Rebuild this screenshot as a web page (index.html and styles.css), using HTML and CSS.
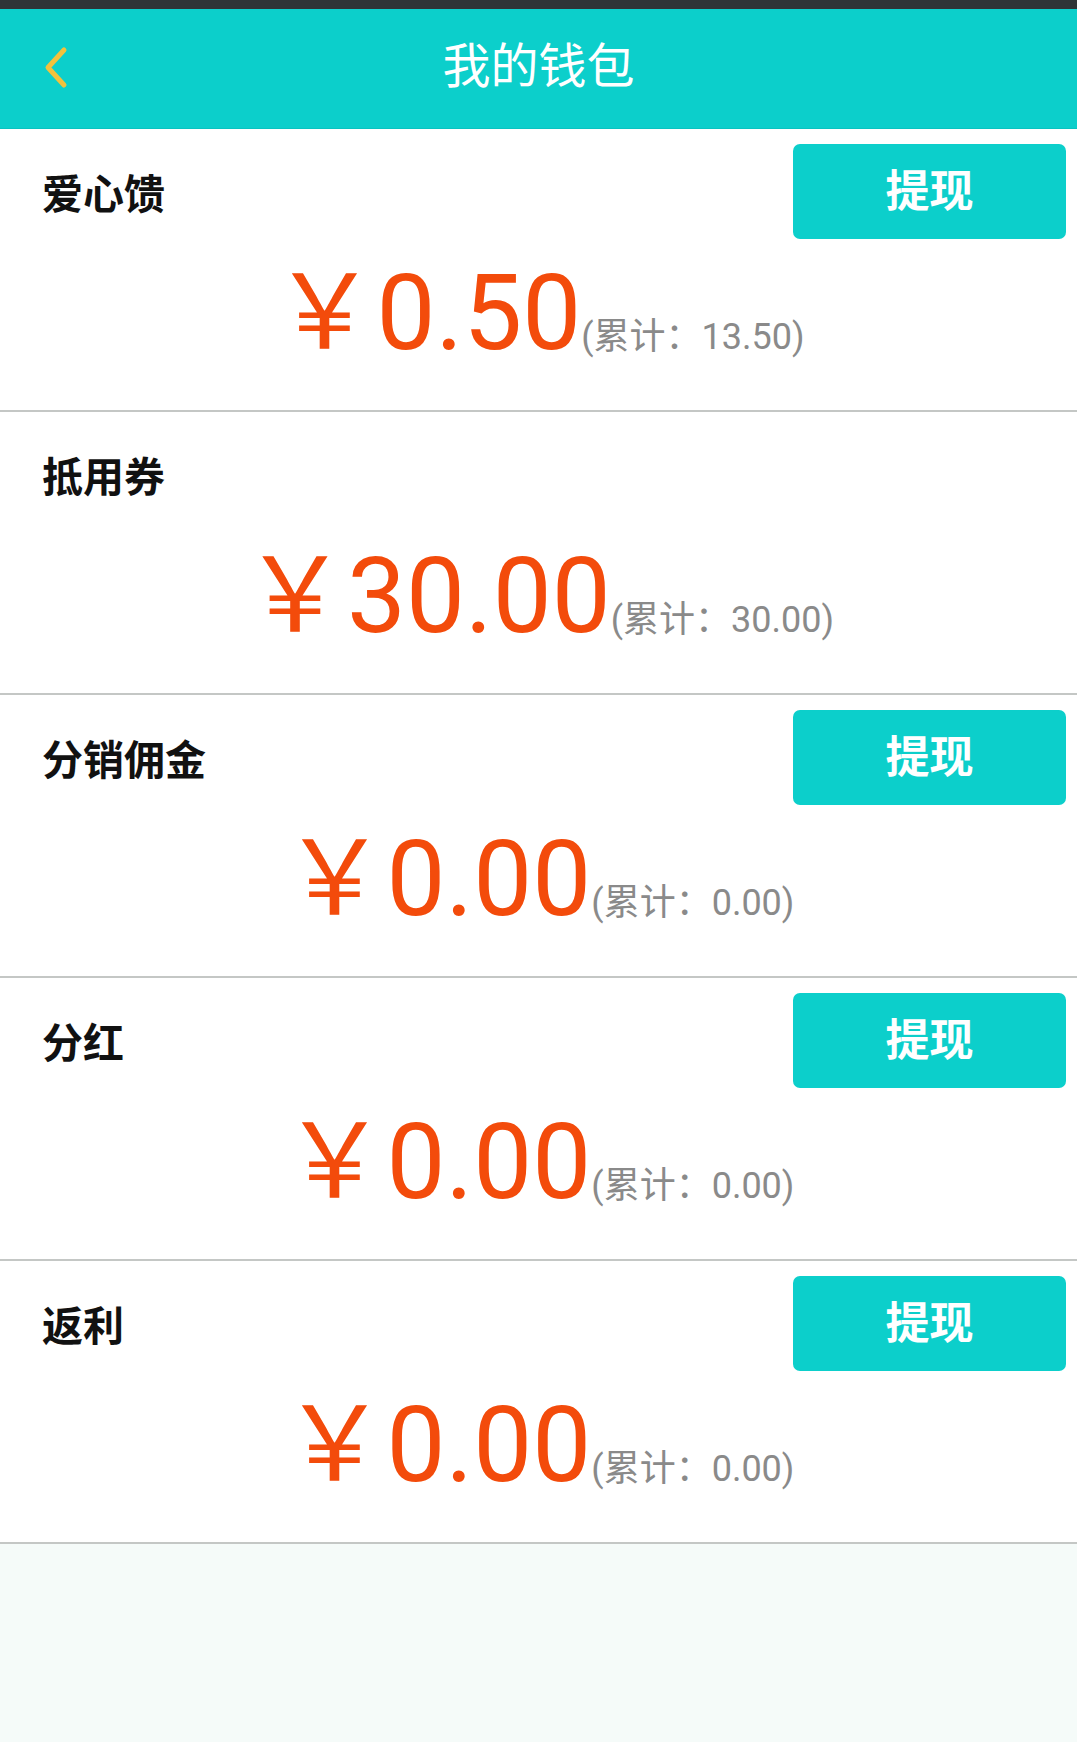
FILE: index.html
```html
<!DOCTYPE html>
<html lang="zh-CN">
<head>
<meta charset="utf-8">
<title>我的钱包</title>
<link rel="stylesheet" href="styles.css">
</head>
<body>
<div class="statusbar"></div>
<header class="topbar">
  <a class="back" href="#" aria-label="返回">
    <svg width="34" height="46" viewBox="0 0 34 46"><path d="M25 5 L9 22.5 L25 40" fill="none" stroke="#f2c23c" stroke-width="5" stroke-linecap="round" stroke-linejoin="round"/></svg>
  </a>
  <h1 class="title">我的钱包</h1>
  <span class="spacer"></span>
</header>
<main class="list">
  <section class="card">
    <div class="card-head"><span class="label">爱心馈</span><button class="btn">提现</button></div>
    <div class="amount"><span class="yen">￥</span><span class="num">0.50</span><span class="total">(累计：13.50)</span></div>
  </section>
  <section class="card">
    <div class="card-head"><span class="label">抵用券</span></div>
    <div class="amount"><span class="yen">￥</span><span class="num">30.00</span><span class="total">(累计：30.00)</span></div>
  </section>
  <section class="card">
    <div class="card-head"><span class="label">分销佣金</span><button class="btn">提现</button></div>
    <div class="amount"><span class="yen">￥</span><span class="num">0.00</span><span class="total">(累计：0.00)</span></div>
  </section>
  <section class="card">
    <div class="card-head"><span class="label">分红</span><button class="btn">提现</button></div>
    <div class="amount"><span class="yen">￥</span><span class="num">0.00</span><span class="total">(累计：0.00)</span></div>
  </section>
  <section class="card">
    <div class="card-head"><span class="label">返利</span><button class="btn">提现</button></div>
    <div class="amount"><span class="yen">￥</span><span class="num">0.00</span><span class="total">(累计：0.00)</span></div>
  </section>
</main>
</body>
</html>
```
FILE: styles.css
```css
html, body {
  margin: 0;
  padding: 0;
}
body {
  background: #f5fbf9;
  font-family: Roboto, "Noto Sans CJK SC", sans-serif;
  width: 1077px;
  min-height: 1742px;
}
.statusbar {
  height: 9px;
  background: #2f3537;
}
.topbar {
  height: 119px;
  background: #0ccfcb;
  border-bottom: 1px solid #09c3c1;
  display: grid;
  grid-template-columns: 1fr auto 1fr;
  align-items: center;
}
.back {
  justify-self: start;
  margin-left: 39px;
  margin-top: -2px;
  display: flex;
}
.title {
  margin: 0 0 13px 0;
  font-family: "Noto Sans CJK SC", sans-serif;
  font-weight: 400;
  font-size: 48px;
  line-height: 1;
  color: #ffffff;
}
.card {
  box-sizing: border-box;
  background: #ffffff;
  height: 283px;
  padding-top: 15px;
  border-bottom: 2px solid #c4c7c5;
}
.card-head {
  height: 95px;
  padding: 0 11px 0 42px;
  display: flex;
  align-items: center;
  justify-content: space-between;
}
.label {
  font-family: "Noto Sans CJK SC", sans-serif;
  font-weight: 700;
  font-size: 41px;
  line-height: 1;
  color: #111111;
  padding-bottom: 1px;
}
.btn {
  width: 273px;
  height: 95px;
  border: 0;
  border-radius: 7px;
  background: #0ccfcb;
  color: #ffffff;
  font-family: "Noto Sans CJK SC", sans-serif;
  font-weight: 700;
  font-size: 44px;
  line-height: 1;
  padding: 0 0 8px 0;
}
.amount {
  margin-top: 13px;
  display: flex;
  justify-content: center;
  align-items: baseline;
  color: #f34b0b;
}
.yen {
  font-family: "Noto Sans CJK SC", sans-serif;
  font-size: 104px;
  line-height: 1;
}
.num {
  font-family: Roboto, sans-serif;
  font-size: 105px;
  line-height: 1;
}
.total {
  font-family: Roboto, "Noto Sans CJK SC", sans-serif;
  font-size: 36px;
  line-height: 1;
  color: #8a8a8a;
}
```
